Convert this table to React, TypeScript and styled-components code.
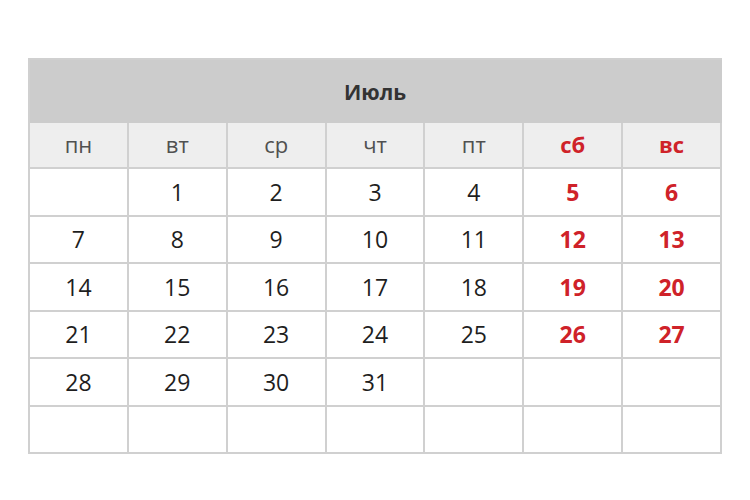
import styled, { createGlobalStyle } from "styled-components";

const GlobalStyle = createGlobalStyle`
    body {
        margin: 0;
        background: #fff;
        font-family: "Open Sans", "Noto Sans", sans-serif;
    }
`;

const days = ["пн", "вт", "ср", "чт", "пт", "сб", "вс"];

// July starting on Tuesday, 6 weeks shown
const buildWeeks = () => {
    const cells: (number | null)[] = [null];
    for (let d = 1; d <= 31; d++) cells.push(d);
    while (cells.length < 42) cells.push(null);
    const weeks: (number | null)[][] = [];
    for (let i = 0; i < 42; i += 7) weeks.push(cells.slice(i, i + 7));
    return weeks;
};

const App = () => {
    const weeks = buildWeeks();
    return (
        <>
            <GlobalStyle />
            <Page>
                <Calendar>
                    <Title>Июль</Title>
                    {days.map((day, i) => (
                        <DayName key={day} $weekend={i >= 5}>
                            {day}
                        </DayName>
                    ))}
                    {weeks.map((week, w) =>
                        week.map((date, i) => (
                            <DateCell key={`${w}-${i}`} $weekend={i >= 5}>
                                {date}
                            </DateCell>
                        ))
                    )}
                </Calendar>
            </Page>
        </>
    );
};

const Page = styled.div`
    padding: 58px 0 0 28px;
`;

const Calendar = styled.div`
    width: 694px;
    box-sizing: border-box;
    display: grid;
    grid-template-columns: repeat(7, 1fr);
    grid-template-rows: 63px 46px repeat(6, 47.5px);
    border-left: 2px solid #d0d0d0;
    border-top: 2px solid #d0d0d0;
`;

const Title = styled.div`
    grid-column: 1 / -1;
    display: flex;
    align-items: center;
    justify-content: center;
    background: #cccccc;
    border-right: 2px solid #cccccc;
    font-size: 21px;
    font-weight: 700;
    color: #333;
`;

const Cell = styled.div<{ $weekend?: boolean }>`
    display: flex;
    align-items: center;
    justify-content: center;
    border-right: 2px solid #d0d0d0;
    border-bottom: 2px solid #d0d0d0;
    color: ${({ $weekend }) => ($weekend ? "#cf2229" : "#1e1e1e")};
    font-weight: ${({ $weekend }) => ($weekend ? 700 : 400)};
`;

const DayName = styled(Cell)`
    background: #eeeeee;
    font-size: 22px;
    color: ${({ $weekend }) => ($weekend ? "#cf2229" : "#505050")};
    padding-bottom: 2px;
`;

const DateCell = styled(Cell)`
    font-size: 23px;
`;

export default App;
